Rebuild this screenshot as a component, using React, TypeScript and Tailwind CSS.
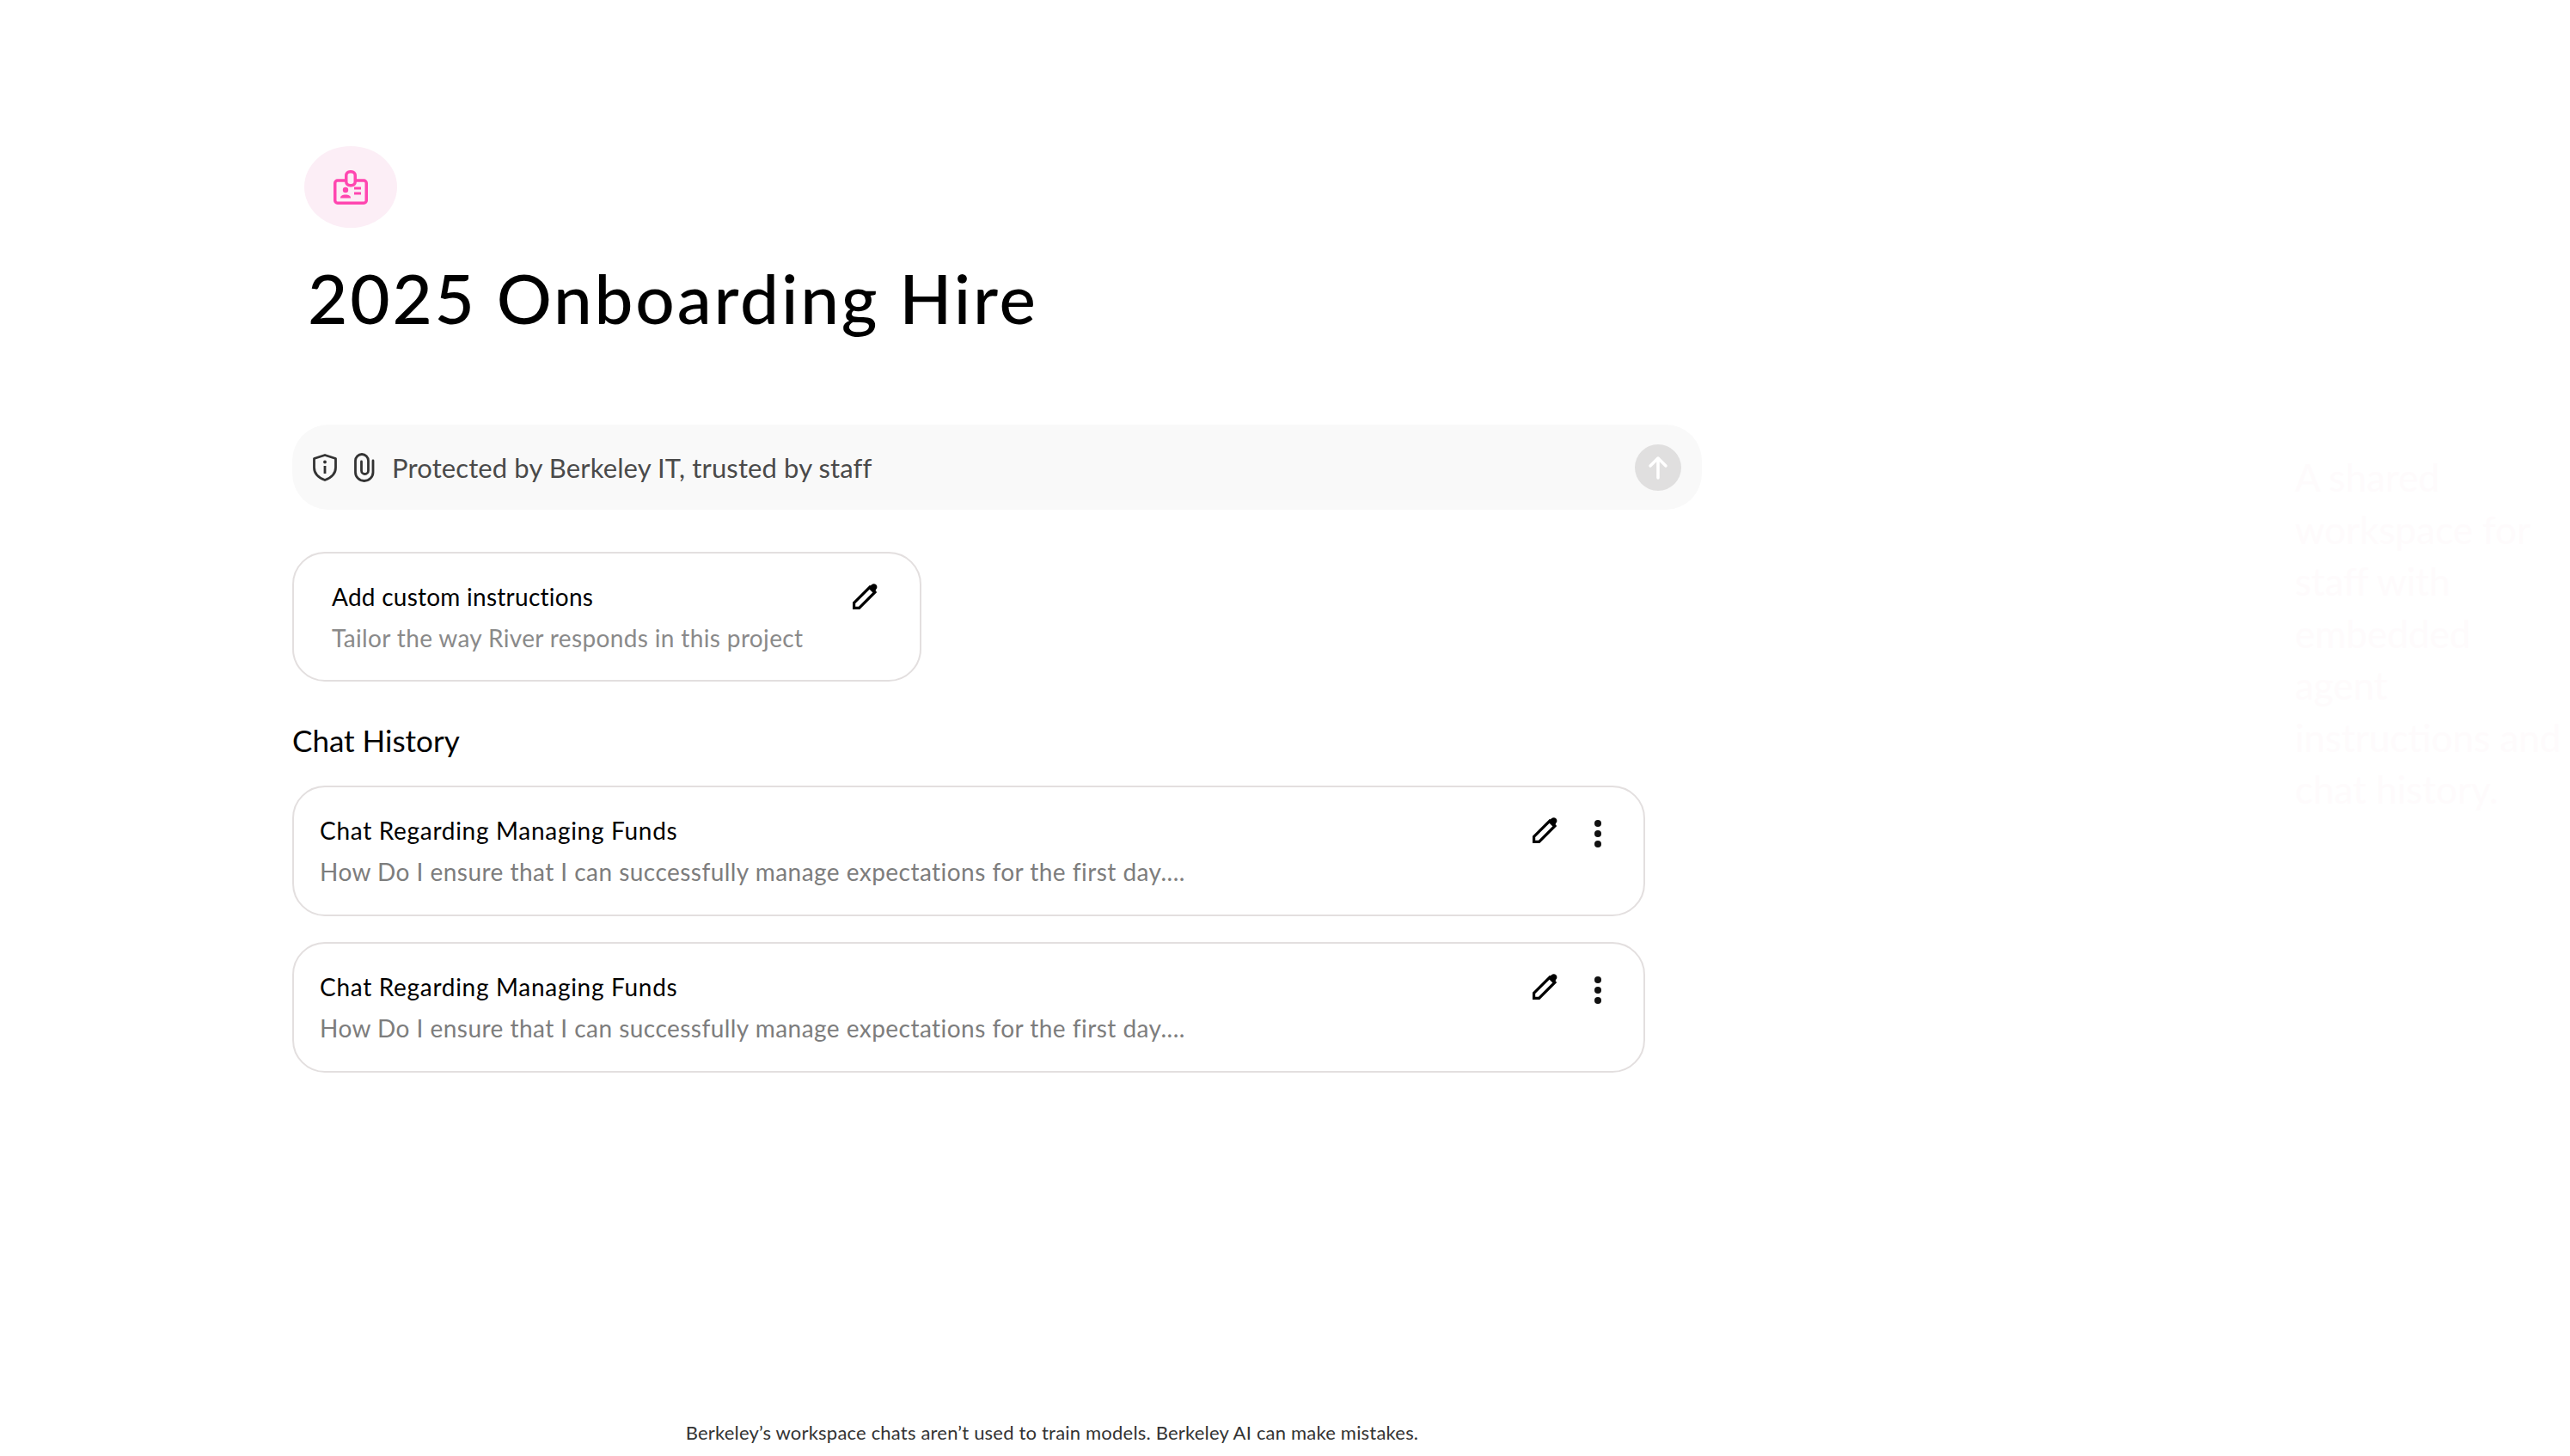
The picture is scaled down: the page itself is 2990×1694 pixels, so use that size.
const BODY_FONT = "font-['Lato','Noto_Sans',sans-serif]";

function BadgeIcon() {
  return (
    <svg width="40" height="40" viewBox="0 0 40 40" fill="none" stroke="#ff46b0" strokeWidth="3.500">
      <rect x="1.750" y="12" width="36.500" height="26.250" rx="3" />
      <rect x="14.750" y="1.750" width="10.500" height="16" rx="4.500" fill="#fceef6" />
      <circle cx="14" cy="23" r="3.200" fill="#ff46b0" stroke="none" />
      <path d="M8 32.500c0-3 2.500-4 6-4s6 1 6 4z" fill="#ff46b0" stroke="none" />
      <path d="M24 21h8M24 27h8" strokeWidth="3" />
    </svg>
  );
}

function ShieldIcon() {
  return (
    <svg width="28" height="32" viewBox="0 0 28 32" fill="none" stroke="#333" strokeWidth="2.800">
      <path d="M14 1.500 26.500 5.500V16c0 7.500-5.500 12-12.500 14.500C7 28 1.500 23.500 1.500 16V5.500z" strokeLinejoin="round" />
      <path d="M14 14v9" />
      <circle cx="14" cy="9.500" r="1.900" fill="#333" stroke="none" />
    </svg>
  );
}

function ClipIcon() {
  return (
    <svg width="24" height="34" viewBox="0 0 24 34" fill="none" stroke="#333" strokeWidth="2.800" strokeLinecap="round">
      <path d="M8.500 10v10.500a4 4 0 0 0 8 0V9a7.500 7.500 0 0 0-15 0v13.500a10.250 10 0 0 0 20.500 0V9" />
    </svg>
  );
}

function PencilIcon() {
  return (
    <svg width="30" height="30" viewBox="0 0 30 30" fill="none" stroke="#000" strokeWidth="3.200">
      <path d="M1.600 28.400v-6L20 4 26 10 7.600 28.400z" strokeLinejoin="miter" />
      <path d="M18 5 22 1.300c1.600-1.500 3.800-1.500 5.300 0s1.500 3.700 0 5.300L25 12z" fill="#000" stroke="none" />
    </svg>
  );
}

function DotsIcon() {
  return (
    <svg width="12" height="32" viewBox="0 0 12 32" fill="#111">
      <circle cx="6" cy="4" r="4" />
      <circle cx="6" cy="16" r="4" />
      <circle cx="6" cy="28" r="4" />
    </svg>
  );
}

const chats = [
  { title: "Chat Regarding Managing Funds", preview: "How Do I ensure that I can successfully manage expectations for the first day...." },
  { title: "Chat Regarding Managing Funds", preview: "How Do I ensure that I can successfully manage expectations for the first day...." },
];

export default function App() {
  return (
    <div className={`${BODY_FONT} flex h-[1694px] w-full overflow-hidden bg-white`}>
      <main className="flex h-full w-[2448px] shrink-0 flex-col pl-[340px]">
        <div className="ml-[14px] mt-[170px] flex h-[95px] w-[108px] items-center justify-center rounded-[50%] bg-[#fceef6]">
          <BadgeIcon />
        </div>
        <h1 className="ml-[18px] mt-[36px] text-[80px] leading-[90px] font-medium tracking-[2.800px] text-black">2025 Onboarding Hire</h1>

        <div className="mt-[103px] flex h-[99px] w-[1640px] items-center rounded-[42px] bg-[#f9f9f9] pl-[24px] pr-[24px]">
          <ShieldIcon />
          <span className="ml-[20px]"><ClipIcon /></span>
          <span className="ml-[20px] text-[31px] leading-[40px] tracking-[0.120px] text-[#4a4a4a]">Protected by Berkeley IT, trusted by staff</span>
          <button className="ml-auto flex h-[54px] w-[54px] items-center justify-center rounded-full bg-[#e0dfdf]">
            <svg width="24" height="28" viewBox="0 0 24 28" fill="none" stroke="#fff" strokeWidth="3.500" strokeLinecap="round" strokeLinejoin="round">
              <path d="M12 26V3M3 12l9-9 9 9" />
            </svg>
          </button>
        </div>

        <div className="mt-[49px] flex h-[151px] w-[732px] items-start justify-between rounded-[38px] border-2 border-[#e3dfdf] pl-[44px] pr-[48px]">
          <div>
            <p className="mt-[30px] text-[28px] leading-[40px] tracking-[0.250px] text-black">Add custom instructions</p>
            <p className="mt-[8px] text-[28px] leading-[40px] tracking-[0.360px] text-[#8a8a8a]">Tailor the way River responds in this project</p>
          </div>
          <span className="mt-[35px]"><PencilIcon /></span>
        </div>

        <h2 className="mt-[46px] text-[35px] leading-[44px] font-normal text-black">Chat History</h2>

        <div className="mt-[31px] flex w-[1574px] flex-col gap-[30px]">
          {chats.map((chat, i) => (
            <div key={i} className="flex h-[152px] items-start justify-between rounded-[38px] border-2 border-[#e3dfdf] pl-[30px] pr-[47px]">
              <div>
                <p className="mt-[30px] text-[28px] leading-[40px] tracking-[0.700px] text-black">{chat.title}</p>
                <p className="mt-[8px] text-[28px] leading-[40px] tracking-[0.460px] text-[#7d7d7d]">{chat.preview}</p>
              </div>
              <div className="mt-[35px] flex items-start gap-[40px]">
                <PencilIcon />
                <span className="mt-[3px]"><DotsIcon /></span>
              </div>
            </div>
          ))}
        </div>

        <footer className="mt-auto pb-[13px] pr-[340px] text-center text-[22px] leading-[28px] tracking-[0.200px] text-[#333]">
          Berkeley’s workspace chats aren’t used to train models. Berkeley AI can make mistakes.
        </footer>
      </main>

      <aside className="ml-[222px] mt-[525px] w-[312px] text-[44px] leading-[60.500px] text-[#fefbfc]">
        A shared workspace for staff with embedded agent instructions and chat history.
      </aside>
    </div>
  );
}
